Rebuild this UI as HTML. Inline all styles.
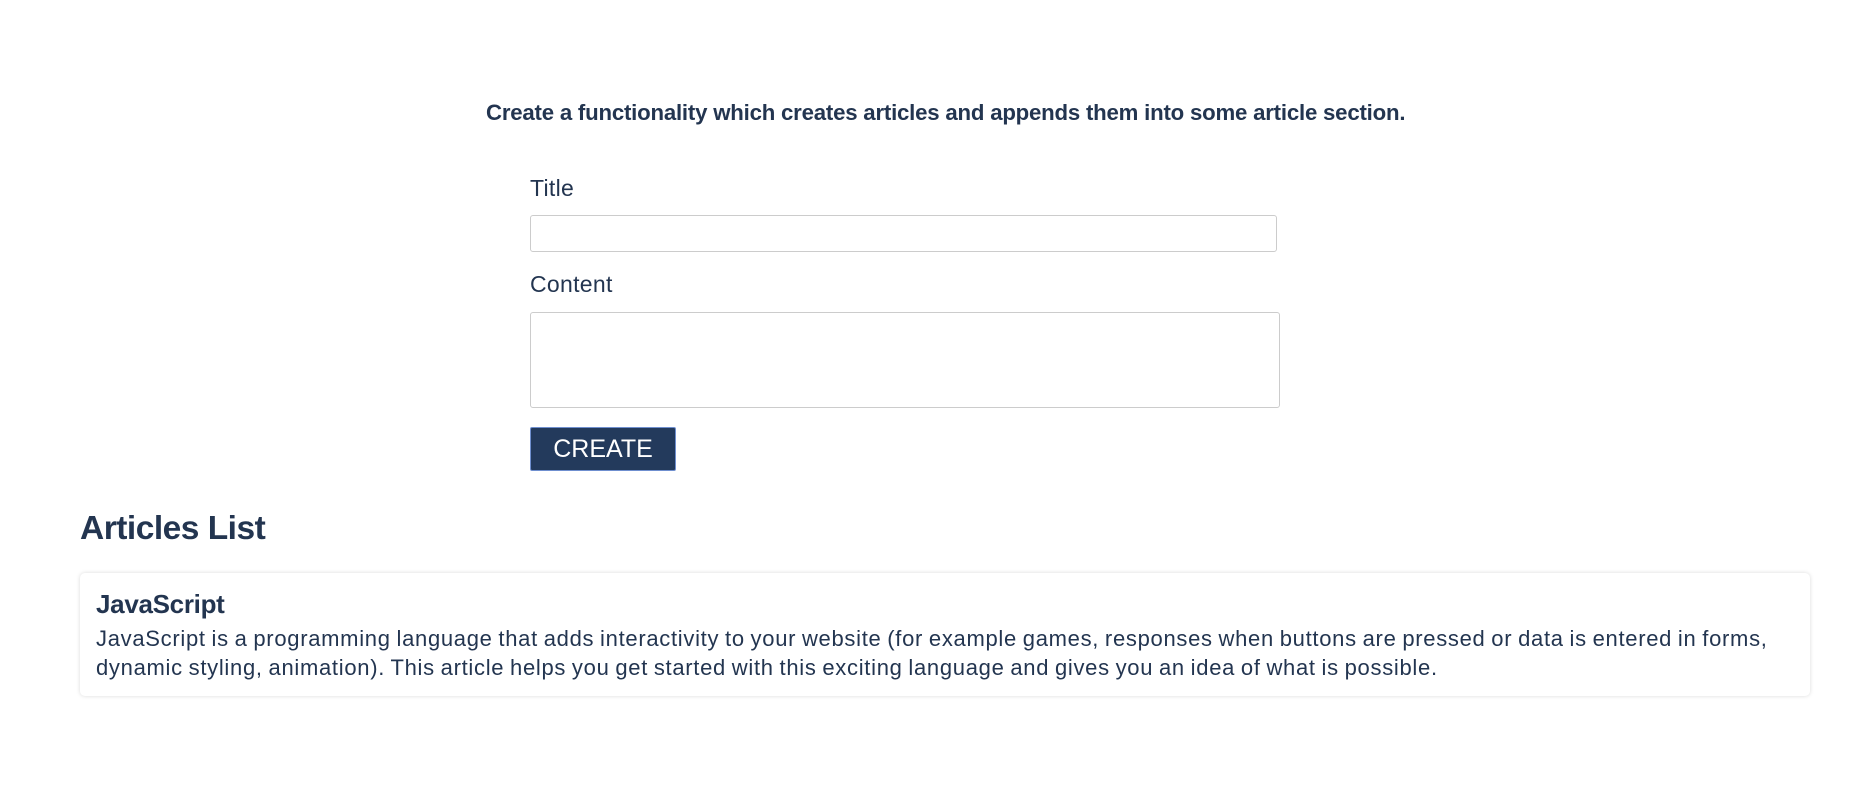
<!DOCTYPE html>
<html><head><meta charset="utf-8"><style>
*{box-sizing:border-box;margin:0;padding:0}
body{width:1875px;height:810px;background:#fff;font-family:"Liberation Sans",sans-serif;color:#233550;position:relative;overflow:hidden}
.h{position:absolute;left:486px;top:100px;white-space:nowrap;font-weight:bold;font-size:22.2px;letter-spacing:-0.2px}
.lbl{position:absolute;left:530px;font-size:23px;letter-spacing:0.3px}
.in{position:absolute;left:530px;border:1px solid #ccc;border-radius:3px;background:#fff}
.btn{position:absolute;left:530px;top:427px;width:146px;height:44px;background:#233a5c;border:1px solid #6f8fcf;border-radius:2px;color:#fff;font-size:25px;text-align:center;line-height:42px}
.al{position:absolute;left:80px;top:510px;font-size:33.5px;font-weight:bold;letter-spacing:-0.5px}
.card{position:absolute;left:80px;top:573px;width:1730px;height:123px;border-radius:5px;box-shadow:0 0 4px rgba(0,0,0,.15);padding:16px 16px}
.card h3{font-size:26px;line-height:30px;font-weight:bold;letter-spacing:-0.3px}
.card p{font-size:22px;line-height:28.5px;margin-top:6px;letter-spacing:0.7px;word-spacing:-1px}
</style></head><body>
<div class="h">Create a functionality which creates articles and appends them into some article section.</div>
<div class="lbl" style="top:175px">Title</div>
<div class="in" style="top:215px;width:747px;height:37px"></div>
<div class="lbl" style="top:271px">Content</div>
<div class="in" style="top:312px;width:750px;height:96px"></div>
<div class="btn">CREATE</div>
<div class="al">Articles List</div>
<div class="card"><h3>JavaScript</h3><p>JavaScript is a programming language that adds interactivity to your website (for example games, responses when buttons are pressed or data is entered in forms, dynamic styling, animation). This article helps you get started with this exciting language and gives you an idea of what is possible.</p></div>
</body></html>
